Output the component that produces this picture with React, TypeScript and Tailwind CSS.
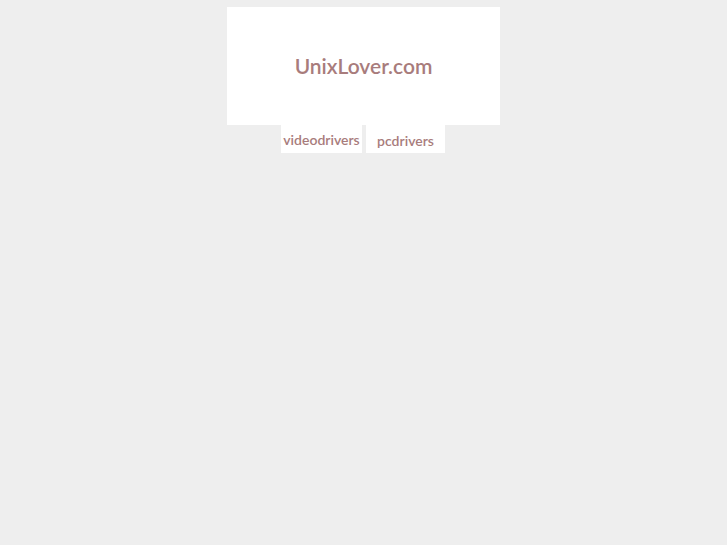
import React from 'react';

const tabs = ['videodrivers', 'pcdrivers'];

const App: React.FC = () => {
  return (
    <div className="min-h-screen w-full bg-[#eeeeee] pt-[7px] font-['Lato',sans-serif]">
      <div className="mx-auto w-[273px]">
        {/* site header */}
        <div className="flex h-[118px] items-center justify-center bg-white">
          <h1 className="text-[21px] font-semibold text-[#a87c7c]">UnixLover.com</h1>
        </div>
        {/* nav tabs */}
        <div className="flex gap-[4px] pl-[54px]">
          <a className="flex h-[28px] w-[81px] items-center justify-center bg-white text-[14px] font-semibold text-[#a87c7c]">
            {tabs[0]}
          </a>
          <a className="flex h-[28px] w-[79px] items-center justify-center bg-white pt-[3px] text-[14px] font-semibold text-[#a87c7c]">
            {tabs[1]}
          </a>
        </div>
      </div>
    </div>
  );
};

export default App;
